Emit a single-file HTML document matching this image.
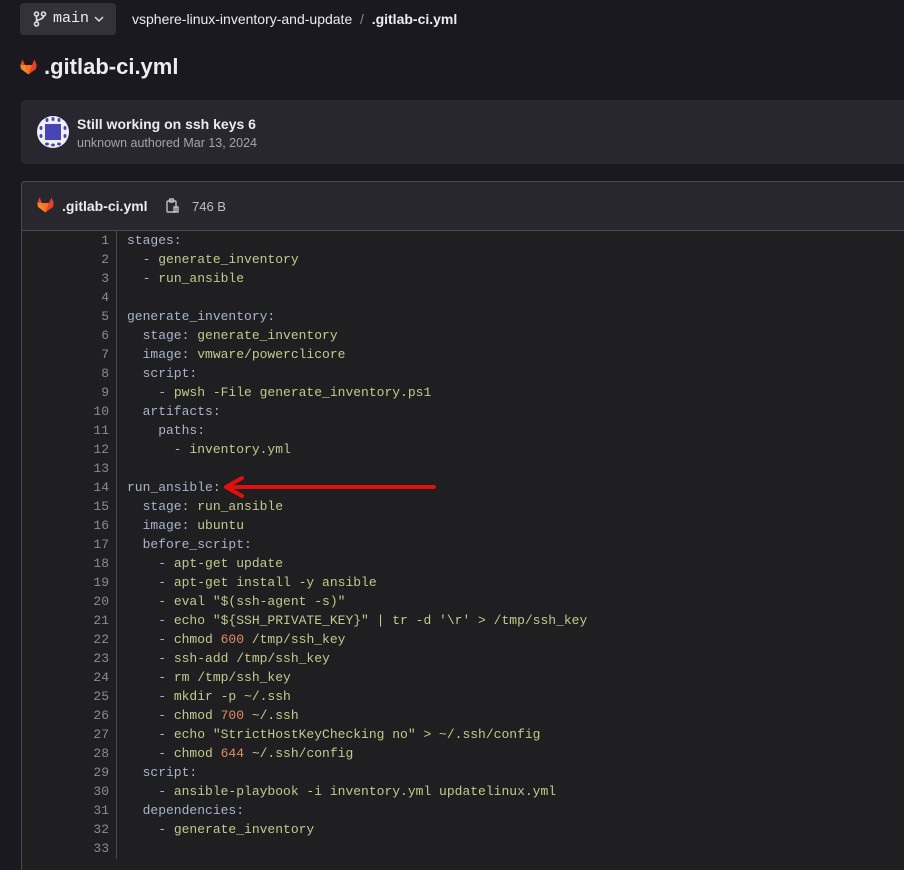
<!DOCTYPE html>
<html><head><meta charset="utf-8"><style>
*{margin:0;padding:0;box-sizing:border-box}
body{width:904px;height:859px;overflow:hidden;background:#1a191f;font-family:"Liberation Sans",sans-serif;color:#ececef;position:relative}
.abs{position:absolute}
.btn{left:20px;top:3px;width:96px;height:32px;background:#333238;border-radius:4px}
.btn span{position:absolute;left:33px;top:7px;font-family:"Liberation Mono",monospace;font-size:15px;color:#ececef}
.crumb{left:132px;top:11px;font-size:14px;color:#ececef}
.title{left:44px;top:54px;font-size:22px;font-weight:bold}
.card{left:21px;top:100px;width:900px;height:64px;background:#28272f;border-radius:4px}
.fh{left:21px;top:181px;width:900px;height:50px;background:#28272e;border:1px solid #4a4950;border-right:none;border-radius:4px 0 0 0}
.code{left:21px;top:230px;width:900px;height:640px;background:#1f1f21;border-left:1px solid #4a4950;border-top:1px solid #4a4950}
.gut{left:116px;top:231px;width:1px;height:628px;background:#4a4950}
pre{font-family:"Liberation Mono",monospace;font-size:13px;line-height:19px}
.nums{left:40px;top:231px;width:69px;text-align:right;color:#8b8a91}
.src{left:127px;top:231px;color:#c5c88c}
.k{color:#a9b3c9}.n{color:#e38a66}
</style></head><body>
<div class="abs btn">
<svg class="abs" style="left:13px;top:8px" width="14" height="16" viewBox="0 0 14 16" fill="none" stroke="#dcdcde" stroke-width="1.6"><circle cx="3.5" cy="3" r="2"/><circle cx="3.5" cy="13" r="2"/><circle cx="10.5" cy="3" r="2"/><path d="M3.5 5v6M10.5 5c0 4-7 3-7 6"/></svg>
<span>main</span>
<svg class="abs" style="left:74px;top:13px" width="10" height="7" viewBox="0 0 10 7" fill="none" stroke="#dcdcde" stroke-width="1.5"><path d="M1 1l4 4 4-4"/></svg>
</div>
<div class="abs crumb">vsphere-linux-inventory-and-update &nbsp;<span style="color:#89888d">/</span>&nbsp; <b>.gitlab-ci.yml</b></div>
<svg class="abs" style="left:20px;top:59px" width="17" height="16" viewBox="0 0 17 16"><path d="M8.5 15.5L1 10 0.3 6 2.5 0.5 5 6h7L14.5 0.5 16.7 6 16 10z" fill="#e24329"/><path d="M8.5 15.5L5 6h7z" fill="#fc6d26"/><path d="M8.5 15.5L1 10 0.3 6 5 6z" fill="#fca326" opacity=".7"/></svg>
<div class="abs title">.gitlab-ci.yml</div>
<div class="abs card">
<svg class="abs" style="left:16px;top:16px" width="32" height="32" viewBox="0 0 32 32"><circle cx="16" cy="16" r="16" fill="#f0f0f8"/><rect x="8" y="8" width="16" height="16" fill="#4a45b5"/><g fill="#4a45b5"><ellipse cx="10" cy="4" rx="1.5" ry="2"/><ellipse cx="16" cy="3" rx="1.5" ry="2"/><ellipse cx="22" cy="4" rx="1.5" ry="2"/><ellipse cx="10" cy="28" rx="2" ry="1.5"/><ellipse cx="16" cy="29" rx="2" ry="1.5"/><ellipse cx="22" cy="28" rx="2" ry="1.5"/><ellipse cx="4" cy="12" rx="1.5" ry="2"/><ellipse cx="4" cy="20" rx="1.5" ry="2"/><ellipse cx="28" cy="12" rx="1.5" ry="2"/><ellipse cx="28" cy="20" rx="1.5" ry="2"/></g></svg>
<div class="abs" style="left:56px;top:16px;font-size:14px;font-weight:bold">Still working on ssh keys 6</div>
<div class="abs" style="left:56px;top:36px;font-size:12.5px;color:#a4a3a8">unknown authored Mar 13, 2024</div>
</div>
<div class="abs fh">
<svg class="abs" style="left:15px;top:15px" width="17" height="16" viewBox="0 0 17 16"><path d="M8.5 15.5L1 10 0.3 6 2.5 0.5 5 6h7L14.5 0.5 16.7 6 16 10z" fill="#e24329"/><path d="M8.5 15.5L5 6h7z" fill="#fc6d26"/><path d="M8.5 15.5L1 10 0.3 6 5 6z" fill="#fca326" opacity=".7"/></svg>
<div class="abs" style="left:40px;top:16px;font-size:14px;font-weight:bold">.gitlab-ci.yml</div>
<svg class="abs" style="left:144px;top:16px" width="13" height="16" viewBox="0 0 13 16" fill="none" stroke="#bfbfc3" stroke-width="1.4"><rect x="1" y="3" width="9" height="11" rx="1"/><rect x="3.5" y="1" width="4" height="3" rx=".5"/><path d="M8 9h4v5H8z"/></svg>
<div class="abs" style="left:170px;top:17px;font-size:13px;color:#bfbfc3">746 B</div>
</div>
<div class="abs code"></div>
<div class="abs gut"></div>
<pre class="abs nums">1
2
3
4
5
6
7
8
9
10
11
12
13
14
15
16
17
18
19
20
21
22
23
24
25
26
27
28
29
30
31
32
33</pre>
<pre class="abs src"><span class="k">stages:</span>
<span class="k">  - </span>generate_inventory
<span class="k">  - </span>run_ansible

<span class="k">generate_inventory:</span>
<span class="k">  stage: </span>generate_inventory
<span class="k">  image: </span>vmware/powerclicore
<span class="k">  script:</span>
<span class="k">    - </span>pwsh -File generate_inventory.ps1
<span class="k">  artifacts:</span>
<span class="k">    paths:</span>
<span class="k">      - </span>inventory.yml

<span class="k">run_ansible:</span>
<span class="k">  stage: </span>run_ansible
<span class="k">  image: </span>ubuntu
<span class="k">  before_script:</span>
<span class="k">    - </span>apt-get update
<span class="k">    - </span>apt-get install -y ansible
<span class="k">    - </span>eval "$(ssh-agent -s)"
<span class="k">    - </span>echo "${SSH_PRIVATE_KEY}" | tr -d '\r' &gt; /tmp/ssh_key
<span class="k">    - </span>chmod <span class="n">600</span> /tmp/ssh_key
<span class="k">    - </span>ssh-add /tmp/ssh_key
<span class="k">    - </span>rm /tmp/ssh_key
<span class="k">    - </span>mkdir -p ~/.ssh
<span class="k">    - </span>chmod <span class="n">700</span> ~/.ssh
<span class="k">    - </span>echo "StrictHostKeyChecking no" &gt; ~/.ssh/config
<span class="k">    - </span>chmod <span class="n">644</span> ~/.ssh/config
<span class="k">  script:</span>
<span class="k">    - </span>ansible-playbook -i inventory.yml updatelinux.yml
<span class="k">  dependencies:</span>
<span class="k">    - </span>generate_inventory
</pre>
<svg class="abs" style="left:220px;top:476px" width="220" height="22" viewBox="0 0 220 22"><path d="M214 11H10M22 2L6 11l16 9" fill="none" stroke="#e01010" stroke-width="4" stroke-linecap="round" stroke-linejoin="round"/></svg>
</body></html>
